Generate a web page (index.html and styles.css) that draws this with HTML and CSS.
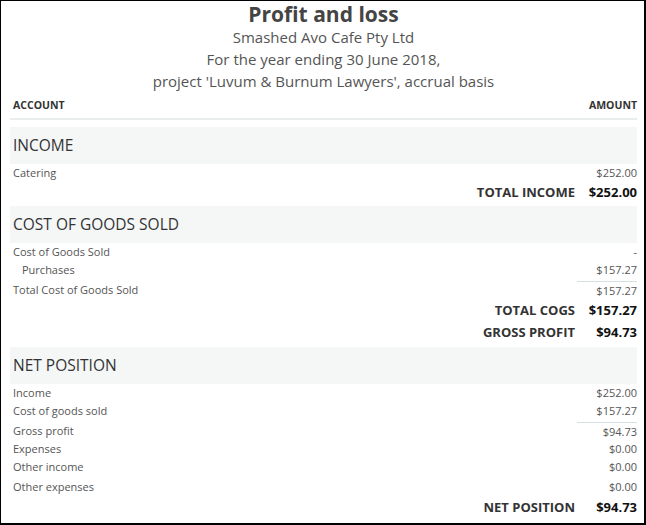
FILE: index.html
```html
<!DOCTYPE html>
<html>
<head>
<meta charset="utf-8">
<link rel="stylesheet" href="styles.css">
</head>
<body>
<div class="report">
  <header class="report-head">
    <h1 class="title">Profit and loss</h1>
    <div class="sub">Smashed Avo Cafe Pty Ltd</div>
    <div class="sub">For the year ending 30 June 2018,</div>
    <div class="sub">project 'Luvum &amp; Burnum Lawyers', accrual basis</div>
  </header>
  <div class="cols">
    <span>ACCOUNT</span>
    <span>AMOUNT</span>
  </div>

  <section class="sect">
    <div class="band">INCOME</div>
    <div class="row"><span>Catering</span><span class="amt">$252.00</span></div>
    <div class="total"><span class="tl">TOTAL INCOME</span><span class="ta">$252.00</span></div>
  </section>

  <section class="sect">
    <div class="band">COST OF GOODS SOLD</div>
    <div class="row"><span>Cost of Goods Sold</span><span class="amt">-</span></div>
    <div class="row indent"><span>Purchases</span><span class="amt">$157.27</span></div>
    <div class="row sum"><span>Total Cost of Goods Sold</span><span class="amt">$157.27</span></div>
    <div class="total t2"><span class="tl">TOTAL COGS</span><span class="ta">$157.27</span></div>
    <div class="total t2"><span class="tl">GROSS PROFIT</span><span class="ta">$94.73</span></div>
  </section>

  <section class="sect">
    <div class="band">NET POSITION</div>
    <div class="row"><span>Income</span><span class="amt">$252.00</span></div>
    <div class="row"><span>Cost of goods sold</span><span class="amt">$157.27</span></div>
    <div class="row sum"><span>Gross profit</span><span class="amt">$94.73</span></div>
    <div class="row"><span>Expenses</span><span class="amt">$0.00</span></div>
    <div class="row"><span>Other income</span><span class="amt">$0.00</span></div>
    <div class="row tall"><span>Other expenses</span><span class="amt">$0.00</span></div>
    <div class="total t3"><span class="tl">NET POSITION</span><span class="ta">$94.73</span></div>
  </section>
</div>
</body>
</html>
```

FILE: styles.css
```css
* { box-sizing: border-box; }
html, body { margin: 0; padding: 0; background: #fff; }
body { font-family: "Open Sans", "Liberation Sans", sans-serif; color: #555; }

.report {
  width: 646px;
  height: 525px;
  border: 1px solid #000;
  border-right-width: 2px;
  border-bottom-width: 2px;
  padding: 1px 7px 0 9px;
  overflow: hidden;
}

.report-head { text-align: center; }
.title {
  margin: 0;
  font-size: 21px;
  line-height: 24px;
  font-weight: 700;
  color: #444;
}
.sub {
  font-size: 15px;
  line-height: 22px;
  color: #555;
}

.cols {
  display: flex;
  justify-content: space-between;
  margin-top: 6px;
  padding: 0 0 6px 3px;
  height: 22px;
  line-height: 14px;
  font-size: 10.5px;
  font-weight: 700;
  color: #333;
  border-bottom: 2px solid #e9eded;
}

.sect { margin-top: 7px; }
.sect + .sect { margin-top: 4px; }

.band {
  background: #f5f7f7;
  height: 37px;
  line-height: 37px;
  padding-left: 3px;
  font-size: 15.5px;
  color: #333;
}

.row {
  display: flex;
  justify-content: space-between;
  height: 18px;
  line-height: 18px;
  padding-left: 3px;
  font-size: 11px;
  color: #555;
}
.row.indent { padding-left: 12px; }
.row.tall { height: 20px; line-height: 22px; }
.row .amt { display: block; text-align: right; }
.row.sum { height: 20px; padding-top: 2px; line-height: 18px; }
.row.sum .amt { width: 60px; border-top: 1px solid #d6dfe2; line-height: 17px; }

.total {
  display: flex;
  justify-content: flex-end;
  height: 20px;
  line-height: 20px;
  font-size: 13px;
  font-weight: 700;
  color: #333;
}
.total.t2 { height: 22px; line-height: 22px; }
.total.t3 { height: 22px; line-height: 22px; }
.total .ta { width: 62px; text-align: right; color: #111; }
```
